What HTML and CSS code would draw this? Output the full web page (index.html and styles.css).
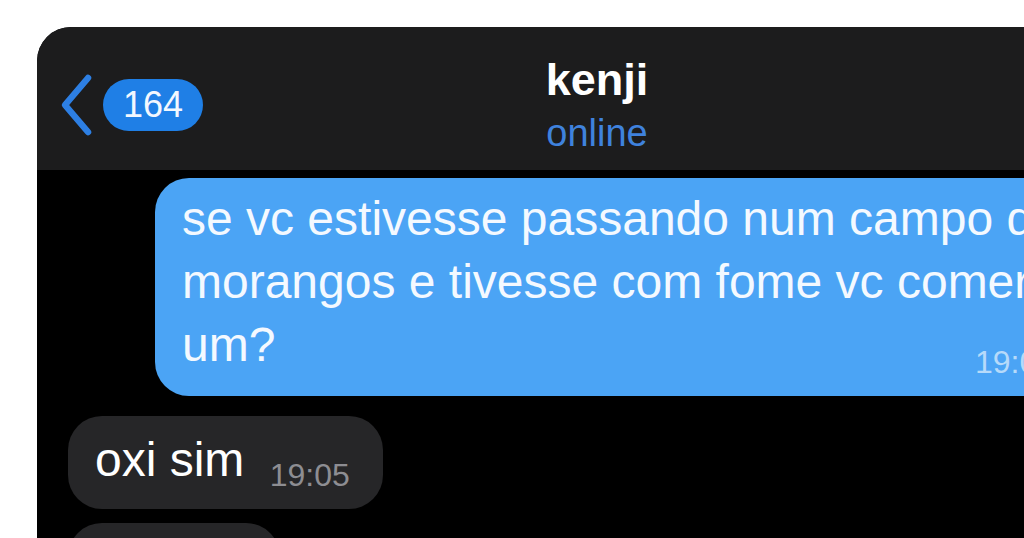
FILE: index.html
```html
<!DOCTYPE html>
<html lang="pt-BR">
<head>
    <meta charset="UTF-8">
    <meta name="viewport" content="width=device-width, initial-scale=1.0">
    <title>kenji</title>
    <link rel="stylesheet" href="styles.css">
</head>
<body>
    <div class="phone">
        <header class="chat-header">
            <div class="back">
                <svg class="back-icon" width="38" height="64" viewBox="0 0 38 64">
                    <path d="M31 5 L8 32 L31 59" fill="none" stroke="#2d7fe3" stroke-width="6.5" stroke-linecap="round" stroke-linejoin="round"/>
                </svg>
                <span class="badge">164</span>
            </div>
            <div class="contact">
                <div class="contact-name">kenji</div>
                <div class="contact-status">online</div>
            </div>
            <div></div>
        </header>

        <main class="messages">
            <div class="bubble bubble-out">
                se vc estivesse passando num campo de<br>
                morangos e tivesse com fome vc comeria<br>
                um?
                <span class="time">19:06</span>
            </div>

            <div class="bubble bubble-in">
                oxi sim <span class="time">19:05</span>
            </div>

            <div class="bubble bubble-in bubble-next">
                &nbsp;
            </div>
        </main>
    </div>
</body>
</html>
```

FILE: styles.css
```css
* {
    margin: 0;
    padding: 0;
    box-sizing: border-box;
}

body {
    background: #ffffff;
    font-family: 'Liberation Sans', Arial, sans-serif;
    overflow: hidden;
    height: 538px;
}

.phone {
    margin: 27px 0 0 37px;
    width: 1120px;
    height: 600px;
    background: #000000;
    border-radius: 34px 34px 0 0;
    overflow: hidden;
}

.chat-header {
    height: 143px;
    background: #1c1c1d;
    display: grid;
    grid-template-columns: 1fr auto 1fr;
    align-items: start;
}

.back {
    display: flex;
    align-items: center;
    margin: 46px 0 0 20px;
}

.back-icon {
    display: block;
}

.badge {
    margin-left: 8px;
    background: #1f7fe6;
    color: #f2f7ff;
    font-size: 36px;
    line-height: 52px;
    height: 52px;
    width: 100px;
    text-align: center;
    border-radius: 26px;
}

.contact {
    text-align: center;
    padding-top: 28px;
}

.contact-name {
    color: #ffffff;
    font-size: 45px;
    font-weight: 700;
    line-height: 50px;
}

.contact-status {
    color: #3f82dd;
    font-size: 38px;
    line-height: 44px;
    margin-top: 6px;
}

.messages {
    display: flex;
    flex-direction: column;
    align-items: flex-start;
    padding: 8px 0 0 31px;
}

.bubble {
    border-radius: 34px;
    font-size: 48px;
    line-height: 63px;
    position: relative;
    white-space: nowrap;
}

.bubble-out {
    margin-left: 87px;
    width: 918px;
    background: #4ba4f5;
    color: #f4f9ff;
    padding: 9px 20px 20px 27px;
}

.bubble-out .time {
    position: absolute;
    right: 18px;
    bottom: 16px;
    font-size: 32px;
    line-height: 36px;
    color: #b6dafa;
}

.bubble-in {
    margin-top: 20px;
    background: #262628;
    color: #ffffff;
    padding: 12px 33px 18px 27px;
}

.bubble-in .time {
    position: relative;
    top: 10px;
    font-size: 32px;
    line-height: 1;
    color: #8d8d92;
    margin-left: 12px;
}

.bubble-next {
    margin-top: 14px;
    width: 212px;
}
```
